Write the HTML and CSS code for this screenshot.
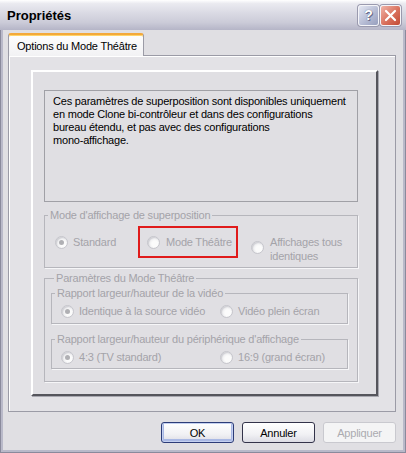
FILE: index.html
```html
<!DOCTYPE html>
<html lang="fr">
<head>
    <meta charset="UTF-8">
    <title>Propriétés</title>
    <link rel="stylesheet" href="styles.css">
</head>
<body>
    <div class="window">
        <div class="titlebar">
            <span class="title">Propriétés</span>
            <div class="caption-buttons">
                <span class="cap-btn help">?</span>
                <span class="cap-btn close">
                    <svg width="13" height="13" viewBox="0 0 13 13">
                        <path d="M2 2 L11 11 M11 2 L2 11" stroke="#fff" stroke-width="2.2" stroke-linecap="round"/>
                    </svg>
                </span>
            </div>
        </div>

        <div class="client">
            <div class="tabs">
                <span class="tab active">Options du Mode Théâtre</span>
            </div>

            <div class="tab-panel">
                <div class="raised">
                    <div class="note">
                        Ces paramètres de superposition sont disponibles uniquement<br>
                        en mode Clone bi-contrôleur et dans des configurations<br>
                        bureau étendu, et pas avec des configurations<br>
                        mono-affichage.
                    </div>

                    <!-- Mode d'affichage -->
                    <div class="group group-mode">
                        <span class="group-title">Mode d'affichage de superposition</span>
                        <div class="radio-row">
                            <label class="radio checked opt-standard"><span class="dot"></span>Standard</label>
                            <div class="highlight">
                                <label class="radio"><span class="dot"></span>Mode Théâtre</label>
                            </div>
                            <label class="radio two-line"><span class="dot"></span><span>Affichages tous<br>identiques</span></label>
                        </div>
                    </div>

                    <!-- Paramètres du Mode Théâtre -->
                    <div class="group group-params">
                        <span class="group-title">Paramètres du Mode Théâtre</span>

                        <div class="group sub-group sub-video">
                            <span class="group-title">Rapport largeur/hauteur de la vidéo</span>
                            <div class="radio-row sub-row">
                                <label class="radio checked opt-first"><span class="dot"></span>Identique à la source vidéo</label>
                                <label class="radio"><span class="dot"></span>Vidéo plein écran</label>
                            </div>
                        </div>

                        <div class="group sub-group sub-display">
                            <span class="group-title">Rapport largeur/hauteur du périphérique d'affichage</span>
                            <div class="radio-row sub-row">
                                <label class="radio checked opt-first"><span class="dot"></span>4:3 (TV standard)</label>
                                <label class="radio"><span class="dot"></span>16:9 (grand écran)</label>
                            </div>
                        </div>
                    </div>
                </div>
            </div>

            <div class="buttons">
                <button class="btn default">OK</button>
                <button class="btn">Annuler</button>
                <button class="btn" disabled>Appliquer</button>
            </div>
        </div>
    </div>
</body>
</html>
```

FILE: styles.css
```css
* {
    box-sizing: border-box;
}

body {
    margin: 0;
    background: #ffffff;
    font-family: "Liberation Sans", Arial, sans-serif;
    font-size: 11px;
    letter-spacing: -0.2px;
    color: #000;
}

.window {
    width: 406px;
    height: 453px;
    display: flex;
    flex-direction: column;
    background: #b9b9c9; /* cadre gris argent */
    box-shadow: inset 1px 0 0 #8a8a9c, inset -1px 0 0 #8a8a9c, inset 0 -1px 0 #8a8a9c;
}

/* Barre de titre */
.titlebar {
    height: 30px;
    display: flex;
    align-items: center;
    padding: 0 5px 0 7px;
    background: linear-gradient(#ffffff 0, #eaeaf0 12%, #d9d9e3 45%, #cbcbd8 75%, #b5b5c7 100%);
}

.title {
    flex: 1;
    font-size: 13px;
    font-weight: bold;
    letter-spacing: 0;
    color: #000;
}

.caption-buttons {
    display: flex;
    gap: 1px;
}

.cap-btn {
    width: 21px;
    height: 21px;
    border-radius: 3px;
    border: 1px solid #f4f4f8;
    box-shadow: 0 0 0 1px #9a9aae;
    display: flex;
    align-items: center;
    justify-content: center;
}

.cap-btn.help {
    background: linear-gradient(135deg, #e4e7f2, #b3b9d2 60%, #979fbe);
    color: #ffffff;
    font-weight: bold;
    font-size: 14px;
    text-shadow: 0 0 1px #4c5270, 1px 1px 0 #6a7090;
}

.cap-btn.close {
    background: linear-gradient(135deg, #f0b4a8, #d9705c 55%, #c24a34);
}

/* Zone client */
.client {
    flex: 1;
    margin: 0 3px 3px;
    padding: 3px 7px 0 5px;
    background: #e0dfe3;
}

.tabs {
    height: 22px;
    display: flex;
    align-items: flex-start;
}

.tab {
    position: relative;
    z-index: 1;
    width: 136px;
    height: 23px;
    padding: 5px 0 0 8px;
    line-height: 13px;
    border: 1px solid #9b9ba6;
    border-bottom: none;
    border-top: 2px solid #f3a93a;
    border-radius: 3px 3px 0 0;
    background: linear-gradient(#fdfdfd, #f2f2f4);
    box-shadow: inset 0 1px 0 #ffd469;
}

.tab-panel {
    height: 357px;
    padding: 14px 0 0 22px;
    border: 1px solid #9b9ba6;
    background: #e3e2e6;
    box-shadow: inset 1px 1px 0 #ffffff;
}

.raised {
    width: 347px;
    height: 326px;
    padding: 18px 0 0 11px;
    border: 2px solid;
    border-color: #ffffff #55555c #55555c #ffffff;
    background: #e0dfe3;
    box-shadow: 1px 1px 0 #a8a8b0;
}

.note {
    width: 314px;
    height: 112px;
    padding: 4px 8px;
    line-height: 13px;
    border: 1px solid #a0a0a6;
}

/* Groupes désactivés */
.group {
    border: 1px solid #b6b6bc;
    box-shadow: 1px 1px 0 #f6f6f8;
    color: #a4a3a9;
}

.group-title {
    display: table;
    margin: -7px 0 0 3px;
    padding: 0 2px;
    line-height: 13px;
    background: #e0dfe3;
}

.group-mode {
    width: 314px;
    height: 53px;
    margin-top: 13px;
}

.group-params {
    width: 314px;
    height: 104px;
    margin-top: 10px;
    padding-left: 6px;
}

.sub-group {
    width: 297px;
}

.sub-video {
    height: 31px;
    margin-top: 8px;
}

.sub-display {
    height: 30px;
    margin-top: 15px;
}

.radio-row {
    display: flex;
    align-items: flex-start;
    margin-top: 4px;
    padding-left: 10px;
}

.radio {
    display: flex;
    align-items: center;
    gap: 5px;
    line-height: 13px;
}

.dot {
    position: relative;
    flex: none;
    width: 13px;
    height: 13px;
    border-radius: 50%;
    border: 1px solid #c6c6cc;
    background: radial-gradient(circle at 62% 62%, #fbfbfb 30%, #e4e4e8 80%);
    box-shadow: inset 1px 1px 1px #cfcfd4;
}

.checked .dot::after {
    content: "";
    position: absolute;
    left: 3px;
    top: 3px;
    width: 5px;
    height: 5px;
    border-radius: 50%;
    background: #b0b0b4;
}

.opt-standard {
    width: 83px;
    margin-top: 10px;
}

.highlight {
    width: 100px;
    height: 32px;
    padding-left: 7px;
    display: flex;
    align-items: center;
    border: 2px solid #e01b1b;
}

.highlight .radio {
    gap: 6px;
}

.two-line {
    margin: 9px 0 0 13px;
    align-items: flex-start;
    gap: 6px;
    line-height: 14px;
}

.two-line .dot {
    margin-top: 6px;
}

.sub-row {
    margin-top: 5px;
    padding-left: 9px;
}

.opt-first {
    width: 159px;
}

/* Boutons */
.buttons {
    display: flex;
    justify-content: flex-end;
    gap: 8px;
    margin-top: 10px;
}

.btn {
    width: 73px;
    height: 21px;
    padding: 0;
    font-family: "Liberation Sans", Arial, sans-serif;
    font-size: 11px;
    letter-spacing: -0.2px;
    color: #000;
    border: 1px solid #33334a;
    border-radius: 3px;
    background: linear-gradient(#ffffff, #f1f1f4 60%, #dcdce4);
}

.btn.default {
    border-color: #2c3c78;
    box-shadow: inset 0 0 0 1px #c4d0f0, inset 0 -1px 0 2px #a9b8e4;
}

.btn:disabled {
    color: #ababb0;
    border-color: #c9c9cf;
    background: #f4f4f5;
}
```
